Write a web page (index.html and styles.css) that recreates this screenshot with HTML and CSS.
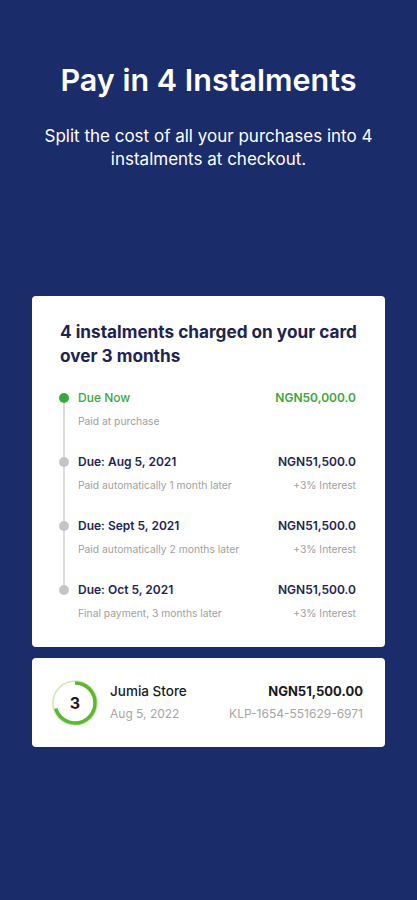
FILE: index.html
```html
<!DOCTYPE html>
<html lang="en">
<head>
    <meta charset="UTF-8">
    <meta name="viewport" content="width=device-width, initial-scale=1.0">
    <title>Pay in 4 Instalments</title>
    <link rel="stylesheet" href="styles.css">
</head>
<body>
    <div class="screen">
        <header class="intro">
            <h1>Pay in 4 Instalments</h1>
            <p>Split the cost of all your purchases into 4 instalments at checkout.</p>
        </header>

        <section class="card schedule">
            <h2>4 instalments charged on your card over 3 months</h2>
            <div class="timeline">
                <div class="step paid">
                    <span class="dot"></span>
                    <div class="step-row">
                        <strong>Due Now</strong>
                        <strong>NGN50,000.0</strong>
                    </div>
                    <div class="step-row sub">
                        <span>Paid at purchase</span>
                    </div>
                </div>
                <div class="step">
                    <span class="dot"></span>
                    <div class="step-row">
                        <strong>Due: Aug 5, 2021</strong>
                        <strong>NGN51,500.0</strong>
                    </div>
                    <div class="step-row sub">
                        <span>Paid automatically 1 month later</span>
                        <span>+3% Interest</span>
                    </div>
                </div>
                <div class="step">
                    <span class="dot"></span>
                    <div class="step-row">
                        <strong>Due: Sept 5, 2021</strong>
                        <strong>NGN51,500.0</strong>
                    </div>
                    <div class="step-row sub">
                        <span>Paid automatically 2 months later</span>
                        <span>+3% Interest</span>
                    </div>
                </div>
                <div class="step last">
                    <span class="dot"></span>
                    <div class="step-row">
                        <strong>Due: Oct 5, 2021</strong>
                        <strong>NGN51,500.0</strong>
                    </div>
                    <div class="step-row sub">
                        <span>Final payment, 3 months later</span>
                        <span>+3% Interest</span>
                    </div>
                </div>
            </div>
        </section>

        <section class="card order">
            <div class="progress">
                <svg width="48" height="48" viewBox="0 0 48 48">
                    <circle cx="24" cy="24" r="22" fill="none" stroke="#c9e8b4" stroke-width="1.5"/>
                    <circle cx="24" cy="24" r="20" fill="none" stroke="#5cb82e" stroke-width="3.5"
                            stroke-dasharray="88 125.7" transform="rotate(-90 24 24)"/>
                </svg>
                <span>3</span>
            </div>
            <div class="order-info">
                <div class="order-row">
                    <span class="store">Jumia Store</span>
                    <span class="amount">NGN51,500.00</span>
                </div>
                <div class="order-row muted">
                    <span>Aug 5, 2022</span>
                    <span>KLP-1654-551629-6971</span>
                </div>
            </div>
        </section>
    </div>
</body>
</html>
```

FILE: styles.css
```css
* {
    margin: 0;
    padding: 0;
    box-sizing: border-box;
    font-family: Inter, 'Noto Sans', sans-serif;
}

body {
    background-color: #1b2c6a;
    min-height: 900px;
}

.screen {
    padding: 0 32px;
}

/* En-tête */
.intro {
    text-align: center;
    color: white;
    padding-top: 61px;
    height: 296px;
}

.intro h1 {
    font-size: 30.5px;
    font-weight: 600;
    line-height: 38px;
}

.intro p {
    font-size: 17px;
    line-height: 23px;
    margin: 26px -24px 0;
}

/* Cartes */
.card {
    background: white;
    border-radius: 4px;
}

.schedule {
    padding: 24px 29px 24px 28px;
    height: 351px;
}

.schedule h2 {
    font-size: 17.2px;
    font-weight: 700;
    line-height: 24px;
    color: #1d2452;
    margin: 0 -14px 20px 0;
}

.timeline {
    position: relative;
}

.step {
    position: relative;
    padding-left: 18px;
    height: 64px;
}

.step::before {
    content: '';
    position: absolute;
    left: 3px;
    top: 10px;
    width: 1.5px;
    height: 64px;
    background: #dcdcdc;
}

.step.last::before {
    display: none;
}

.dot {
    position: absolute;
    left: -1px;
    top: 5px;
    width: 10px;
    height: 10px;
    border-radius: 50%;
    background: #c4c4c4;
}

.step.paid .dot {
    background: #3aa83a;
}

.step-row {
    display: flex;
    justify-content: space-between;
    font-size: 12px;
    line-height: 20px;
    color: #1d2452;
}

.step-row strong {
    font-weight: 600;
}

.step.paid .step-row strong {
    color: #3aa83a;
    font-weight: 500;
}

.step.paid .step-row strong + strong {
    font-weight: 600;
}

.step-row.sub {
    font-size: 10.3px;
    color: #a0a0a0;
    margin-top: 3px;
}

.order {
    margin-top: 11px;
    height: 89px;
    display: flex;
    align-items: center;
    padding: 0 22px 0 19px;
}

.progress {
    position: relative;
    width: 48px;
    height: 48px;
    flex-shrink: 0;
}

.progress svg {
    display: block;
}

.progress span {
    position: absolute;
    inset: 0;
    display: flex;
    align-items: center;
    justify-content: center;
    font-size: 16px;
    font-weight: 700;
    color: #1a1a1a;
}

.order-info {
    flex: 1;
    margin-left: 11px;
}

.order-row {
    display: flex;
    justify-content: space-between;
    font-size: 12.5px;
    line-height: 20px;
    color: #1a1a1a;
}

.store {
    font-weight: 500;
    font-size: 13.5px;
}

.amount {
    font-weight: 700;
    font-size: 13px;
}

.order-row.muted {
    color: #a6a6a6;
    font-size: 12px;
    margin-top: 3px;
}
```
